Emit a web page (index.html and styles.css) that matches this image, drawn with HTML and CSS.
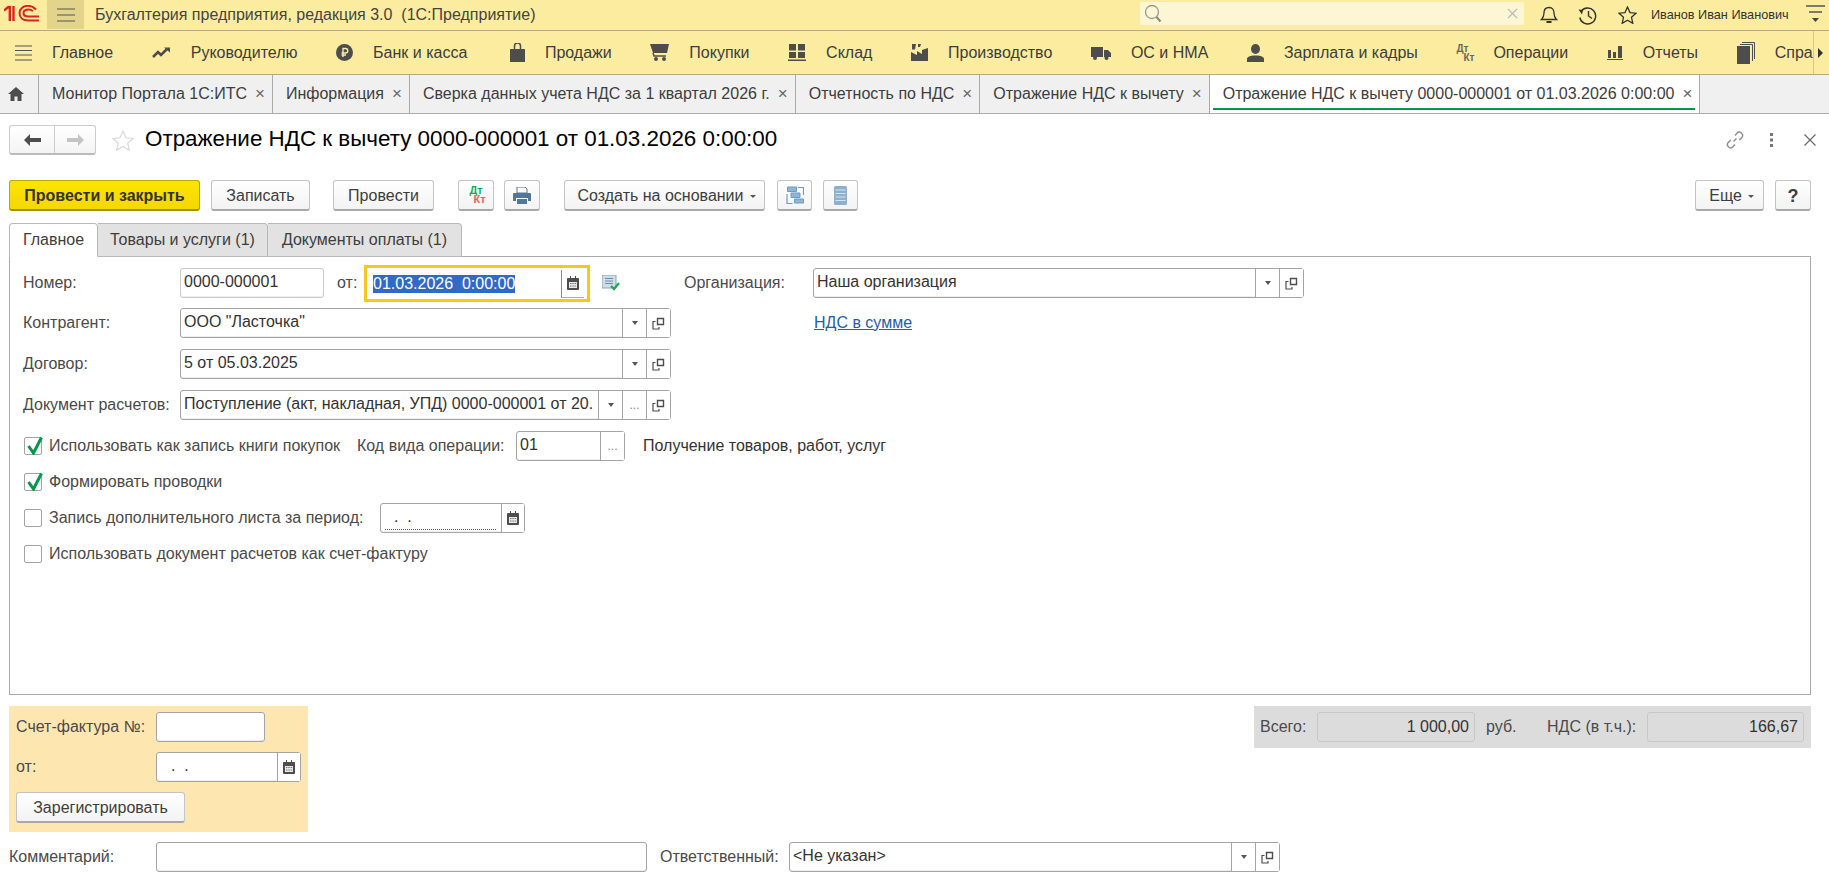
FILE: index.html
```html
<!DOCTYPE html>
<html lang="ru">
<head>
    <meta charset="UTF-8">
    <title>Отражение НДС к вычету</title>
    <link rel="stylesheet" href="styles.css">
</head>
<body>
    <svg class="defs" width="0" height="0">
        <symbol id="i-cal" viewBox="0 0 12 14">
            <path d="M1 2h10a1 1 0 0 1 1 1v10a1 1 0 0 1-1 1H1a1 1 0 0 1-1-1V3a1 1 0 0 1 1-1z" fill="#4d4d4d"/>
            <path d="M3 0h1v3H3zM8 0h1v3H8z" fill="#4d4d4d"/>
            <path d="M2 6h8v6H2z" fill="#e8e8e8"/>
            <path d="M3 7h1.500v1H3zM5.300 7h1.500v1H5.300zM7.600 7h1.500v1H7.600zM3 9.500h1.500v1H3zM5.300 9.500h1.500v1H5.300zM7.600 9.500h1.500v1H7.600z" fill="#777"/>
        </symbol>
        <symbol id="i-copy" viewBox="0 0 13 13">
            <path d="M5.500 1.500h6v6h-6z" fill="none" stroke="#4d4d4d" stroke-width="1.400"/>
            <path d="M3.500 4.500h-2.500v7.500h6v-2" fill="none" stroke="#4d4d4d" stroke-width="1.200"/>
        </symbol>
        <symbol id="i-check" viewBox="0 0 16 19">
            <path d="M1.500 10l5 7L14.500 1.500" fill="none" stroke="#00984a" stroke-width="3"/>
        </symbol>
    </svg>

    <header class="topbar">
        <svg class="logo" width="36" height="17" viewBox="0 0 36 17">
            <path d="M0 5.500l5-4M5.800 1v15M9.500 1v15" fill="none" stroke="#d8261c" stroke-width="2.400"/>
            <path d="M32 4.500C29 1.500 26 .8 24 .8 19 .8 15.500 4 15.500 8c0 4.500 3.500 7.500 8.500 7.500h11" fill="none" stroke="#d8261c" stroke-width="2"/>
            <path d="M29 6c-1.500-1-3-1.500-4.500-1.500-3 0-5 1.500-5 3.500 0 2.500 2 3.500 5 3.500H35" fill="none" stroke="#d8261c" stroke-width="2"/>
        </svg>
        <div class="menu-btn">
            <svg width="18" height="14" viewBox="0 0 18 14"><path d="M0 1h18M0 7h18M0 13h18" stroke="#555" stroke-width="1.200"/></svg>
        </div>
        <div class="app-title">Бухгалтерия предприятия, редакция 3.0  (1С:Предприятие)</div>
        <div class="search">
            <svg width="19" height="19" viewBox="0 0 19 19"><circle cx="8" cy="8" r="6.500" fill="none" stroke="#999" stroke-width="1.300"/><path d="M12.500 13l4 4.500" stroke="#8c8c7a" stroke-width="2.200"/></svg>
            <svg class="search-clear" width="11" height="11" viewBox="0 0 11 11"><path d="M1 1l9 9M10 1l-9 9" stroke="#bbb" stroke-width="1.200"/></svg>
        </div>
        <svg class="top-icon bell" width="18" height="18" viewBox="0 0 18 18"><path d="M9 1.500c-3.500 0-5 2.500-5 5.500 0 3.500-1 5-2.500 6.500h15C15 12 14 10.500 14 7c0-3-1.500-5.500-5-5.500z" fill="none" stroke="#333" stroke-width="1.300"/><path d="M6.500 16h5" stroke="#333" stroke-width="2"/></svg>
        <svg class="top-icon" width="20" height="19" viewBox="0 0 20 19"><path d="M3 5.500a8 8 0 1 1-1.200 6" fill="none" stroke="#333" stroke-width="1.400"/><path d="M0.500 3.500l4.500.500-1 4.500z" fill="#333"/><path d="M10.500 5v5l3.500 2.500" fill="none" stroke="#333" stroke-width="1.400"/></svg>
        <svg class="top-icon" width="19" height="18" viewBox="0 0 19 18"><path d="M9.500 1l2.500 5.600 6 .600-4.500 4.100 1.300 6-5.300-3.100-5.300 3.100 1.300-6L1 7.200l6-.600z" fill="none" stroke="#333" stroke-width="1.300"/></svg>
        <div class="user-name">Иванов Иван Иванович</div>
        <svg class="user-menu" width="19" height="20" viewBox="0 0 19 20"><path d="M0 1h19M3 7h13" stroke="#555" stroke-width="1.300"/><path d="M6 13h7l-3.500 4z" fill="#444"/></svg>
    </header>

    <nav class="sections">
        <div class="section">
            <svg width="17" height="16" viewBox="0 0 17 16"><path d="M0 1h17M0 5.500h17M0 10h17M0 15h17" stroke="#555" stroke-width="1.100"/></svg>
            <span>Главное</span>
        </div>
        <div class="section">
            <svg width="19" height="14" viewBox="0 0 19 14"><path d="M1 11l5-5 3 3 6-6" fill="none" stroke="#4d4d4d" stroke-width="2.600"/><path d="M12 1.500h6v5z" fill="#4d4d4d"/></svg>
            <span>Руководителю</span>
        </div>
        <div class="section">
            <svg width="17" height="17" viewBox="0 0 17 17"><circle cx="8.500" cy="8.500" r="8.500" fill="#4d4d4d"/><path d="M7 13V4.500h2.500a2.200 2.200 0 0 1 0 4.500H5.500M5.500 11h4.500" fill="none" stroke="#fbec9f" stroke-width="1.400"/></svg>
            <span>Банк и касса</span>
        </div>
        <div class="section section-sales">
            <svg width="15" height="19" viewBox="0 0 15 19"><path d="M0 6h15v13H0z" fill="#4d4d4d"/><path d="M4.500 8V3a3 3 0 0 1 6 0v5" fill="none" stroke="#4d4d4d" stroke-width="1.500"/></svg>
            <span>Продажи</span>
        </div>
        <div class="section">
            <svg width="19" height="17" viewBox="0 0 19 17"><path d="M0 0h19l-2 9H3z" fill="#4d4d4d"/><path d="M3 9l1 3h12" fill="none" stroke="#4d4d4d" stroke-width="1.500"/><circle cx="6" cy="15" r="2" fill="#4d4d4d"/><circle cx="14" cy="15" r="2" fill="#4d4d4d"/></svg>
            <span>Покупки</span>
        </div>
        <div class="section">
            <svg width="18" height="17" viewBox="0 0 18 17"><path d="M1 0h7v6.500H1zM10 0h7v6.500h-7zM1 8h7v6H1zM10 8h7v6h-7zM0 15.500h18V17H0z" fill="#4d4d4d"/></svg>
            <span>Склад</span>
        </div>
        <div class="section">
            <svg width="17" height="17" viewBox="0 0 17 17"><path d="M0 17V8l6 3V7l5 3V6l6-2v13z" fill="#4d4d4d"/><path d="M1 0h4l-1 5.500H1zM7 0h3L9 3H7z" fill="#4d4d4d"/></svg>
            <span>Производство</span>
        </div>
        <div class="section">
            <svg width="20" height="14" viewBox="0 0 20 14"><path d="M0 1h12v10H0zM13 4h4l3 3v4h-7z" fill="#4d4d4d"/><circle cx="4" cy="12" r="2" fill="#4d4d4d"/><circle cx="15.500" cy="12" r="2" fill="#4d4d4d"/></svg>
            <span>ОС и НМА</span>
        </div>
        <div class="section">
            <svg width="17" height="18" viewBox="0 0 17 18"><ellipse cx="8.500" cy="5" rx="4.500" ry="5" fill="#4d4d4d"/><path d="M0 18v-3c0-2 3-3.500 8.500-3.500S17 13 17 15v3z" fill="#4d4d4d"/></svg>
            <span>Зарплата и кадры</span>
        </div>
        <div class="section">
            <span class="dt-kt-mono"><i>Дт</i><b>Кт</b></span>
            <span>Операции</span>
        </div>
        <div class="section">
            <svg width="16" height="15" viewBox="0 0 16 15"><path d="M1 5h3v8H1zM6 7h3v6H6zM11 1h4v12h-4zM0 14h16v1H0z" fill="#4d4d4d"/></svg>
            <span>Отчеты</span>
        </div>
        <div class="section">
            <svg width="18" height="22" viewBox="0 0 18 22"><path d="M0 4h13v18H0z" fill="#4d4d4d"/><path d="M3 2.500h12.500V19M5 .5h12.500V17" fill="none" stroke="#4d4d4d"/></svg>
            <span>Справочники</span>
        </div>
        <div class="sections-more"><svg width="5" height="10" viewBox="0 0 5 10"><path d="M0 0l5 5-5 5z" fill="#333"/></svg></div>
    </nav>

    <div class="open-tabs">
        <div class="home-tab">
            <svg width="16" height="14" viewBox="0 0 16 14"><path d="M8 0L0 7h2.500v7h4V9.500h3V14h4V7H16z" fill="#4d4d4d"/></svg>
        </div>
        <div class="open-tab">Монитор Портала 1С:ИТС<em>×</em></div>
        <div class="open-tab">Информация<em>×</em></div>
        <div class="open-tab">Сверка данных учета НДС за 1 квартал 2026 г.<em>×</em></div>
        <div class="open-tab">Отчетность по НДС<em>×</em></div>
        <div class="open-tab">Отражение НДС к вычету<em>×</em></div>
        <div class="open-tab current">Отражение НДС к вычету 0000-000001 от 01.03.2026 0:00:00<em>×</em></div>
    </div>

    <main class="page">
        <div class="doc-head">
            <div class="nav-btns">
                <div class="nav-back"><svg width="17" height="12" viewBox="0 0 17 12"><path d="M6 0v4h11v4H6v4L0 6z" fill="#4d4d4d"/></svg></div>
                <div class="nav-next"><svg width="17" height="12" viewBox="0 0 17 12"><path d="M11 0v4H0v4h11v4l6-6z" fill="#c4c4c4"/></svg></div>
            </div>
            <svg class="fav" width="22" height="21" viewBox="0 0 22 21"><path d="M11 1l3 6.800 7 .700-5.300 4.700 1.600 7L11 16.500l-6.300 3.700 1.600-7L1 8.500l7-.700z" fill="#fff" stroke="#d8d8d8" stroke-width="1.200"/></svg>
            <h1>Отражение НДС к вычету 0000-000001 от 01.03.2026 0:00:00</h1>
            <svg class="head-link" width="18" height="18" viewBox="0 0 18 18"><path d="M7.500 10.500l3-3M9 4.500l2-2.300a3.200 3.200 0 0 1 4.600 4.500l-2.400 2.400M9 13.500l-2 2.300a3.200 3.200 0 0 1-4.600-4.500l2.400-2.400" fill="none" stroke="#8c8c8c" stroke-width="1.400"/></svg>
            <svg class="head-dots" width="4" height="14" viewBox="0 0 4 14"><path d="M0 0h3v3H0zM0 5.500h3v3H0zM0 11h3v3H0z" fill="#777"/></svg>
            <svg class="head-close" width="12" height="12" viewBox="0 0 12 12"><path d="M.5.500l11 11M11.500.500l-11 11" stroke="#666" stroke-width="1.100"/></svg>
        </div>

        <div class="actions">
            <button class="btn btn-main w-main">Провести и закрыть</button>
            <button class="btn w-save">Записать</button>
            <button class="btn w-post">Провести</button>
            <button class="btn btn-icon w-dt"><span class="dt-kt"><i>Дт</i><b>Кт</b></span></button>
            <button class="btn btn-icon w-print">
                <svg width="18" height="17" viewBox="0 0 18 17"><path d="M4 0h8l2 2v4H4z" fill="#fff" stroke="#4f7799"/><path d="M1 6h16a1 1 0 0 1 1 1v7h-3v-3H3v3H0V7a1 1 0 0 1 1-1z" fill="#4f7799"/><path d="M4 12h10v5H4z" fill="#4f7799"/></svg>
            </button>
            <button class="btn w-create">Создать на основании<span class="caret"></span></button>
            <button class="btn btn-icon w-struct">
                <svg width="18" height="18" viewBox="0 0 18 18"><path d="M12 1.500h5.500V9M1 8v9.500h5.500" fill="none" stroke="#6a9cc4" stroke-width="1.200"/><path d="M1.500 1h9v4.500h-9zM5 7h9v4.500H5zM8.500 13h9v4h-9z" fill="#8fb4d4" stroke="#6a9cc4"/></svg>
            </button>
            <button class="btn btn-icon w-list">
                <svg width="13" height="19" viewBox="0 0 13 19"><rect width="13" height="19" rx="1.500" fill="#8db0cc"/><path d="M1.500 4h10M1.500 7.500h10M1.500 11h10M1.500 14.500h10" stroke="#d7e4ee" stroke-width="1.200"/></svg>
            </button>
            <button class="btn w-more">Еще<span class="caret"></span></button>
            <button class="btn btn-help">?</button>
        </div>

        <div class="form-tabs">
            <div class="form-tab active">Главное</div>
            <div class="form-tab">Товары и услуги (1)</div>
            <div class="form-tab">Документы оплаты (1)</div>
        </div>

        <section class="panel">
            <div class="row row-first">
                <label class="lbl w-lbl">Номер:</label>
                <div class="field plain w-num"><span class="val">0000-000001</span></div>
                <label class="lbl w-ot">от:</label>
                <div class="date-focus">
                    <span class="selected">01.03.2026  0:00:00</span>
                    <span class="cal-btn"><svg width="12" height="14"><use href="#i-cal"/></svg></span>
                </div>
                <svg class="doc-ok" width="18" height="16" viewBox="0 0 18 16"><path d="M0 0h14v13H0z" fill="#cfdde8" stroke="#8aa5ba"/><path d="M3 3.500h8M3 6h8M3 8.500h8" stroke="#6f8ea6"/><path d="M9 11l3 3 5-6" fill="none" stroke="#22a84e" stroke-width="2.200"/></svg>
                <label class="lbl w-org">Организация:</label>
                <div class="field w-orgf">
                    <span class="val">Наша организация</span>
                    <span class="fbtn w-drop"><span class="caret dark"></span></span>
                    <span class="fbtn w-open"><svg width="13" height="13"><use href="#i-copy"/></svg></span>
                </div>
            </div>
            <div class="row">
                <label class="lbl w-lbl">Контрагент:</label>
                <div class="field w-wide">
                    <span class="val">ООО "Ласточка"</span>
                    <span class="fbtn w-drop"><span class="caret dark"></span></span>
                    <span class="fbtn w-open"><svg width="13" height="13"><use href="#i-copy"/></svg></span>
                </div>
                <a class="link">НДС в сумме</a>
            </div>
            <div class="row">
                <label class="lbl w-lbl">Договор:</label>
                <div class="field w-wide">
                    <span class="val">5 от 05.03.2025</span>
                    <span class="fbtn w-drop"><span class="caret dark"></span></span>
                    <span class="fbtn w-open"><svg width="13" height="13"><use href="#i-copy"/></svg></span>
                </div>
            </div>
            <div class="row">
                <label class="lbl w-lbl">Документ расчетов:</label>
                <div class="field w-wide">
                    <span class="val">Поступление (акт, накладная, УПД) 0000-000001 от 20.</span>
                    <span class="fbtn w-drop"><span class="caret dark"></span></span>
                    <span class="fbtn w-dots">...</span>
                    <span class="fbtn w-open"><svg width="13" height="13"><use href="#i-copy"/></svg></span>
                </div>
            </div>
            <div class="checks">
                <div class="row">
                    <span class="box"><svg width="16" height="19"><use href="#i-check"/></svg></span>
                    <span class="chk-text w-chk1">Использовать как запись книги покупок</span>
                    <label class="lbl w-code">Код вида операции:</label>
                    <div class="field w-codef">
                        <span class="val">01</span>
                        <span class="fbtn w-dots">...</span>
                    </div>
                    <span class="op-name">Получение товаров, работ, услуг</span>
                </div>
                <div class="row">
                    <span class="box"><svg width="16" height="19"><use href="#i-check"/></svg></span>
                    <span class="chk-text">Формировать проводки</span>
                </div>
                <div class="row">
                    <span class="box"></span>
                    <span class="chk-text w-chk3">Запись дополнительного листа за период:</span>
                    <div class="field w-period">
                        <span class="val"><span class="empty-date">  .  .</span></span>
                        <span class="fbtn w-cal"><svg width="12" height="14"><use href="#i-cal"/></svg></span>
                    </div>
                </div>
                <div class="row">
                    <span class="box"></span>
                    <span class="chk-text">Использовать документ расчетов как счет-фактуру</span>
                </div>
            </div>
        </section>

        <div class="bottom">
            <div class="invoice">
                <div class="row">
                    <label class="lbl w-inv">Счет-фактура №:</label>
                    <div class="field w-invn"></div>
                </div>
                <div class="row">
                    <label class="lbl w-inv">от:</label>
                    <div class="field w-invd">
                        <span class="val dots-pad">  .  .</span>
                        <span class="fbtn w-cal"><svg width="12" height="14"><use href="#i-cal"/></svg></span>
                    </div>
                </div>
                <button class="btn w-reg">Зарегистрировать</button>
            </div>
            <div class="totals">
                <label class="lbl w-all">Всего:</label>
                <div class="sum w-sum1">1 000,00</div>
                <span class="lbl w-rub">руб.</span>
                <label class="lbl w-vat">НДС (в т.ч.):</label>
                <div class="sum w-sum2">166,67</div>
            </div>
        </div>

        <div class="row comment-row">
            <label class="lbl w-cmt">Комментарий:</label>
            <div class="field w-cmtf"></div>
            <label class="lbl w-resp">Ответственный:</label>
            <div class="field w-respf">
                <span class="val">&lt;Не указан&gt;</span>
                <span class="fbtn w-drop"><span class="caret dark"></span></span>
                <span class="fbtn w-open"><svg width="13" height="13"><use href="#i-copy"/></svg></span>
            </div>
        </div>
    </main>
</body>
</html>
```

FILE: styles.css
```css
* {
    box-sizing: border-box;
}

body {
    margin: 0;
    width: 1829px;
    height: 879px;
    overflow: hidden;
    background-color: #fff;
    font-family: "Liberation Sans", Arial, sans-serif;
    font-size: 16px;
    color: #4a4a4a;
}

.defs {
    position: absolute;
}

/* top bar */
.topbar {
    display: flex;
    align-items: center;
    height: 31px;
    background-color: #fbec9f;
    border-bottom: 1px solid #b4ab7d;
}

.logo {
    margin: -3px 0 0 4px;
}

.menu-btn {
    display: flex;
    align-items: center;
    justify-content: center;
    width: 37px;
    height: 29px;
    margin: -1px 0 0 7px;
    background-color: #e3d48c;
}

.app-title {
    margin-left: 11px;
    width: 1045px;
    white-space: pre;
    color: #444;
}

.search {
    display: flex;
    align-items: center;
    justify-content: space-between;
    width: 384px;
    height: 23px;
    margin-top: -3px;
    padding: 0 6px 0 4px;
    background-color: #fdf6d4;
    border-radius: 2px;
}

.top-icon {
    margin-left: 20px;
    flex: none;
}

.top-icon.bell {
    margin-left: 16px;
}

.user-name {
    margin-left: 14px;
    width: 155px;
    font-size: 12.700px;
    color: #333;
    white-space: nowrap;
}

.user-menu {
    flex: none;
}

/* sections */
.sections {
    position: relative;
    display: flex;
    align-items: center;
    gap: 38.600px;
    height: 44px;
    padding-left: 15px;
    overflow: hidden;
    background-color: #fbec9f;
    border-bottom: 1px solid #b4ab7d;
}

.section {
    display: flex;
    align-items: center;
    gap: 20px;
    flex: none;
    color: #3d3d3d;
    white-space: nowrap;
}

.section-sales {
    margin-left: 4px;
}

.dt-kt-mono {
    display: flex;
    flex-direction: column;
    width: 17px;
    font-size: 10px;
    font-weight: bold;
    line-height: 9px;
    color: #666;
}

.dt-kt-mono i {
    font-style: normal;
}

.dt-kt-mono b {
    margin-left: 7px;
}

.sections-more {
    position: absolute;
    top: 0;
    right: 0;
    display: flex;
    align-items: center;
    justify-content: flex-end;
    width: 16px;
    height: 43px;
    padding-right: 6px;
    background-color: #fbec9f;
    border-left: 1px solid #d6c987;
}

/* open tabs */
.open-tabs {
    display: flex;
    height: 39px;
    background-color: #f0f0f0;
    border-bottom: 1px solid #aaa;
}

.home-tab {
    display: flex;
    align-items: center;
    width: 39px;
    padding-left: 8px;
    border-right: 1px solid #aaa;
}

.open-tab {
    position: relative;
    display: flex;
    align-items: center;
    gap: 8px;
    padding: 0 7px 0 13px;
    color: #3d3d3d;
    white-space: nowrap;
    border-right: 1px solid #aaa;
}

.open-tab em {
    width: 10px;
    font-style: normal;
    font-size: 17px;
    color: #666;
}

.open-tab.current {
    background-color: #fff;
}

.open-tab.current::after {
    content: "";
    position: absolute;
    left: 3px;
    right: 4px;
    bottom: 3px;
    height: 2px;
    background-color: #00984a;
}

/* document */
.page {
    width: 1811px;
    padding-left: 9px;
}

.doc-head {
    display: flex;
    align-items: center;
    height: 30px;
    margin-top: 11px;
}

.nav-btns {
    display: flex;
    width: 87px;
    height: 30px;
    background: linear-gradient(#fff, #f4f4f4);
    border: 1px solid #ccc;
    border-bottom: 2px solid #bbb;
    border-radius: 3px;
}

.nav-back,
.nav-next {
    display: flex;
    align-items: center;
    justify-content: center;
}

.nav-back {
    width: 45px;
    border-right: 1px solid #ccc;
}

.nav-next {
    flex: 1;
}

.fav {
    margin-left: 16px;
}

h1 {
    margin: -2px 0 0 11px;
    font-size: 22.400px;
    font-weight: normal;
    color: #000;
    white-space: nowrap;
}

.head-link {
    margin-left: auto;
}

.head-dots {
    margin-left: 26px;
}

.head-close {
    margin: 0 -5px 0 30px;
}

.actions {
    display: flex;
    margin-top: 25px;
    height: 31px;
}

.btn {
    display: flex;
    align-items: center;
    justify-content: center;
    flex: none;
    height: 31px;
    padding: 2px 0 0;
    font-family: inherit;
    font-size: 16px;
    color: #3d3d3d;
    background: linear-gradient(#fff, #f3f3f3);
    border: 1px solid #c4c4c4;
    border-bottom: 2px solid #a8a8a8;
    border-radius: 3px;
}

.btn-main {
    font-weight: bold;
    color: #333;
    background: linear-gradient(#ffe300, #f4d800);
    border-color: #bda500;
    border-bottom-color: #a48f00;
}

.btn-icon {
    padding: 0;
}

.btn-help {
    width: 36px;
    margin-left: 11px;
    font-size: 18px;
    font-weight: bold;
}

.caret {
    display: inline-block;
    margin-left: 6px;
    border-top: 3px solid #555;
    border-left: 3px solid transparent;
    border-right: 3px solid transparent;
}

.caret.dark {
    margin: 0;
    border-top: 4px solid #555;
}

.dt-kt {
    display: flex;
    flex-direction: column;
    width: 20px;
    font-size: 11px;
    font-weight: bold;
    line-height: 9px;
}

.dt-kt i {
    font-style: normal;
    color: #1aa85a;
}

.dt-kt b {
    margin-left: 7px;
    color: #ec5f5f;
}

.w-main { width: 191px; }
.w-save { width: 99px; margin-left: 11px; }
.w-post { width: 101px; margin-left: 23px; }
.w-dt { width: 36px; margin-left: 24px; }
.w-print { width: 36px; margin-left: 10px; }
.w-create { width: 201px; margin-left: 24px; padding-left: 4px; }
.w-struct { width: 35px; margin-left: 12px; }
.w-list { width: 35px; margin-left: 11px; }
.w-more { width: 69px; margin-left: auto; padding-left: 4px; }

/* form tabs */
.form-tabs {
    display: flex;
    height: 34px;
    margin-top: 12px;
}

.form-tab {
    display: flex;
    align-items: center;
    justify-content: center;
    width: 170px;
    color: #3d3d3d;
    background-color: #e2e2e2;
    border: 1px solid #b8b8b8;
    border-left: 0;
    border-radius: 0 4px 0 0;
}

.form-tab:last-child {
    width: 194px;
}

.form-tab.active {
    position: relative;
    z-index: 1;
    width: 89px;
    background-color: #fff;
    border-left: 1px solid #b8b8b8;
    border-bottom-color: #fff;
    border-radius: 4px 4px 0 0;
}

.panel {
    display: flex;
    flex-direction: column;
    gap: 11px;
    height: 439px;
    margin-top: -1px;
    padding: 11px 0 0 13px;
    border: 1px solid #aaa;
}

.row {
    display: flex;
    align-items: center;
    flex: none;
    height: 30px;
}

.row-first {
    margin-bottom: -1px;
}

.lbl {
    flex: none;
    white-space: nowrap;
    color: #4a4a4a;
}

.w-lbl { width: 157px; }
.w-num { width: 144px; }
.w-ot { width: 27px; margin-left: 13px; }
.w-org { width: 129px; margin-left: 64px; }
.w-orgf { width: 491px; }
.w-wide { width: 491px; }

.field {
    display: flex;
    flex: none;
    height: 30px;
    background-color: #fff;
    border: 1px solid #a4a4a4;
    border-radius: 3px;
    box-shadow: inset 0 -1px 0 #eee;
}

.field.plain {
    border-color: #cbcbcb;
}

.val {
    flex: 1;
    min-width: 0;
    padding: 0 3px;
    line-height: 26px;
    color: #333;
    white-space: pre;
    overflow: hidden;
}

.fbtn {
    display: flex;
    align-items: center;
    justify-content: center;
    flex: none;
    color: #888;
    background-color: #fff;
    border-left: 1px solid #a4a4a4;
}

.w-drop { width: 24px; }
.w-open { width: 24px; }
.w-dots { width: 24px; font-size: 12px; }
.w-cal { width: 23px; }

.date-focus {
    display: flex;
    align-items: center;
    flex: none;
    width: 226px;
    height: 37px;
    margin: -3px 0 -4px;
    padding-left: 6px;
    background-color: #fff;
    border: 3px solid #f6c81e;
}

.selected {
    flex: none;
    width: 142px;
    height: 18px;
    line-height: 18px;
    color: #fff;
    background-color: #3169c6;
    white-space: pre;
}

.cal-btn {
    display: flex;
    align-items: center;
    justify-content: center;
    width: 23px;
    height: 28px;
    margin-left: 46px;
    border-left: 1px solid #888;
    border-bottom: 1px solid #aaa;
}

.doc-ok {
    margin-left: 12px;
    flex: none;
}

.link {
    margin-left: 143px;
    color: #1f5ea8;
    text-decoration: underline;
}

.checks {
    display: flex;
    flex-direction: column;
    gap: 6px;
}

.box {
    position: relative;
    flex: none;
    width: 18px;
    height: 18px;
    margin-left: 1px;
    background-color: #fff;
    border: 1px solid #a4a4a4;
    border-radius: 2px;
}

.box svg {
    position: absolute;
    top: -2px;
    left: 2px;
}

.chk-text {
    margin-left: 7px;
    flex: none;
    white-space: nowrap;
}

.w-chk1 { width: 308px; }
.w-chk3 { width: 331px; }
.w-code { width: 159px; }
.w-codef { width: 109px; }
.w-period { width: 145px; }

.op-name {
    margin-left: 18px;
    color: #333;
}

.empty-date {
    display: inline-block;
    width: 111px;
    height: 24px;
    margin-left: 1px;
    line-height: 22px;
    border-bottom: 1px dotted #d8261c;
}

/* bottom blocks */
.bottom {
    display: flex;
    align-items: flex-start;
    justify-content: space-between;
    margin-top: 11px;
}

.invoice {
    display: flex;
    flex-direction: column;
    gap: 10px;
    width: 299px;
    height: 126px;
    padding: 6px 7px;
    background-color: #fee6b1;
}

.w-inv { width: 140px; }
.w-invn { width: 109px; }
.w-invd { width: 145px; }
.w-reg { width: 169px; }

.dots-pad {
    padding-left: 5px;
}

.totals {
    display: flex;
    align-items: center;
    width: 557px;
    height: 42px;
    padding-left: 6px;
    background-color: #dcdcdc;
}

.sum {
    flex: none;
    height: 30px;
    padding-right: 5px;
    line-height: 28px;
    text-align: right;
    color: #333;
    border: 1px solid #c8c8c8;
    border-radius: 3px;
}

.w-all { width: 57px; }
.w-sum1 { width: 158px; }
.w-rub { width: 61px; margin-left: 11px; }
.w-vat { width: 100px; }
.w-sum2 { width: 157px; }

.comment-row {
    margin-top: 10px;
}

.w-cmt { width: 147px; }
.w-cmtf { width: 491px; }
.w-resp { width: 129px; margin-left: 13px; }
.w-respf { width: 491px; }
```
